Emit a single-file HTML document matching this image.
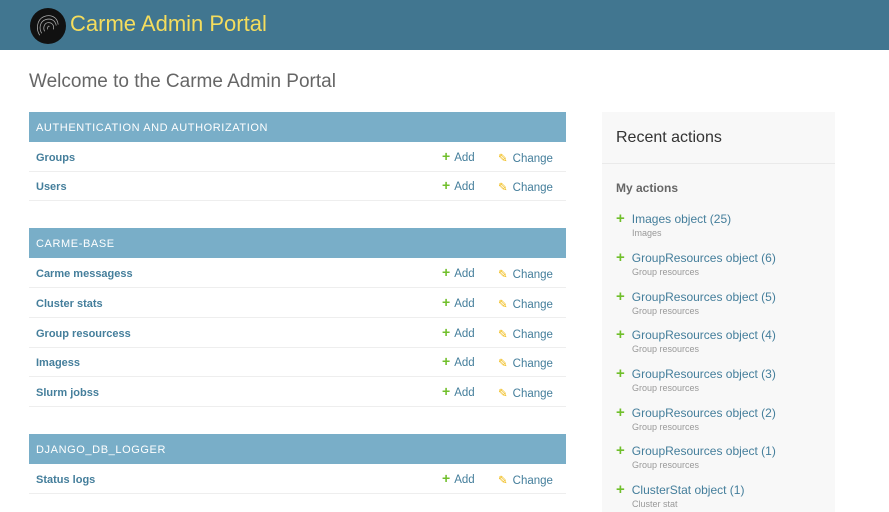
<!DOCTYPE html>
<html><head><meta charset="utf-8"><style>
*{margin:0;padding:0;box-sizing:border-box}
body{width:889px;height:512px;overflow:hidden;background:#fff;font-family:"Liberation Sans",sans-serif;position:relative}
.hdr{position:absolute;left:0;top:0;width:889px;height:50px;background:#417690}
.logo{position:absolute;left:30px;top:8px;width:36px;height:36px;border-radius:50%;background:#111}
.title{position:absolute;left:70px;top:11px;font-size:22px;color:#f5dd5d}
.h1{position:absolute;left:29px;top:71px;font-size:19px;color:#666;font-weight:300}
.cap{position:absolute;left:29px;width:537px;height:30px;background:#79aec8;color:#fff;font-size:11px;letter-spacing:.6px;padding:10px 7px 0}
.row{position:absolute;left:29px;width:537px;height:30px;border-bottom:1px solid #eee;font-size:11px}
.row b{position:absolute;left:7px;top:10px;color:#447e9b}
.add{position:absolute;left:413px;top:9px;color:#447e9b;font-size:11.5px}
.chg{position:absolute;left:469px;top:9px;color:#447e9b;font-size:11.5px}
.plus{color:#70bf2b;font-weight:bold;font-size:14px;margin-right:4px;line-height:10px}
.pen{color:#efb80b;margin-right:5px}
.side{position:absolute;left:602px;top:112px;width:233px;height:400px;background:#f8f8f8}
.side h2{position:absolute;left:14px;top:17px;font-size:16px;font-weight:normal;color:#333}
.side hr{position:absolute;left:0;top:51px;width:233px;border:0;border-top:1px solid #eaeaea}
.side h3{position:absolute;left:14px;top:69px;font-size:12px;color:#666}
.ent{position:absolute;left:14px;font-size:12px;color:#447e9b}
.ent .plus{font-size:15px;margin-right:7px}
.ent small{display:block;margin-left:16px;margin-top:2px;font-size:9px;color:#999}
</style></head><body>
<div class="hdr"><div class="logo"><svg width="36" height="36" viewBox="0 0 37 37" fill="none" stroke="#aaa" stroke-width="0.8"><path d="M10 28C6 22 7 12 14 9s14 0 15 8M12 26c-3-5-2-12 4-14s10 1 11 6M15 24c-2-4 0-9 4-9s6 3 5 7M18 22c0-3 1-4 2-3"/></svg></div><div class="title">Carme Admin Portal</div></div>
<div class="h1">Welcome to the Carme Admin Portal</div>

<div class="cap" style="top:112px">AUTHENTICATION AND AUTHORIZATION</div>
<div class="row" style="top:142px"><b>Groups</b><span class="add"><span class="plus">+</span>Add</span><span class="chg"><span class="pen">✎</span>Change</span></div>
<div class="row" style="top:171px"><b>Users</b><span class="add"><span class="plus">+</span>Add</span><span class="chg"><span class="pen">✎</span>Change</span></div>

<div class="cap" style="top:228px">CARME-BASE</div>
<div class="row" style="top:258px"><b>Carme messagess</b><span class="add"><span class="plus">+</span>Add</span><span class="chg"><span class="pen">✎</span>Change</span></div>
<div class="row" style="top:288px"><b>Cluster stats</b><span class="add"><span class="plus">+</span>Add</span><span class="chg"><span class="pen">✎</span>Change</span></div>
<div class="row" style="top:318px"><b>Group resourcess</b><span class="add"><span class="plus">+</span>Add</span><span class="chg"><span class="pen">✎</span>Change</span></div>
<div class="row" style="top:347px"><b>Imagess</b><span class="add"><span class="plus">+</span>Add</span><span class="chg"><span class="pen">✎</span>Change</span></div>
<div class="row" style="top:377px"><b>Slurm jobss</b><span class="add"><span class="plus">+</span>Add</span><span class="chg"><span class="pen">✎</span>Change</span></div>

<div class="cap" style="top:434px">DJANGO_DB_LOGGER</div>
<div class="row" style="top:464px"><b>Status logs</b><span class="add"><span class="plus">+</span>Add</span><span class="chg"><span class="pen">✎</span>Change</span></div>

<div class="side">
<h2>Recent actions</h2><hr><h3>My actions</h3>
<div class="ent" style="top:100px"><span class="plus">+</span>Images object (25)<small>Images</small></div>
<div class="ent" style="top:139px"><span class="plus">+</span>GroupResources object (6)<small>Group resources</small></div>
<div class="ent" style="top:178px"><span class="plus">+</span>GroupResources object (5)<small>Group resources</small></div>
<div class="ent" style="top:216px"><span class="plus">+</span>GroupResources object (4)<small>Group resources</small></div>
<div class="ent" style="top:255px"><span class="plus">+</span>GroupResources object (3)<small>Group resources</small></div>
<div class="ent" style="top:294px"><span class="plus">+</span>GroupResources object (2)<small>Group resources</small></div>
<div class="ent" style="top:332px"><span class="plus">+</span>GroupResources object (1)<small>Group resources</small></div>
<div class="ent" style="top:371px"><span class="plus">+</span>ClusterStat object (1)<small>Cluster stat</small></div>
</div>
</body></html>
